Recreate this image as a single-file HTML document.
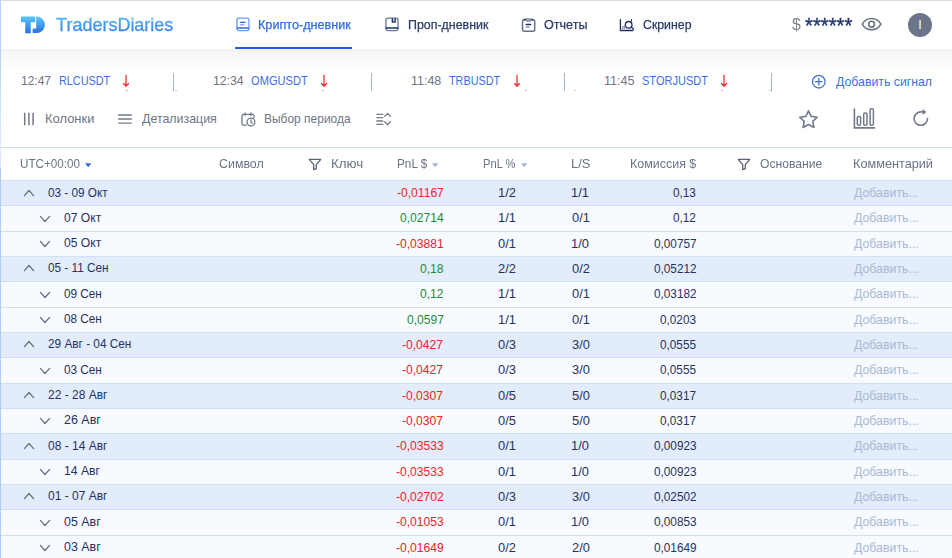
<!DOCTYPE html>
<html lang="ru"><head><meta charset="utf-8"><title>TradersDiaries</title>
<style>
html,body{margin:0;padding:0}
body{width:952px;height:558px;overflow:hidden;background:#fff;position:relative;font-family:"Liberation Sans", sans-serif;}
#app{position:absolute;left:0;top:0;width:952px;height:558px;overflow:hidden;background:#fff}
.t{position:absolute;white-space:nowrap;line-height:20px;height:20px;transform-origin:0 0;font-family:"Liberation Sans", sans-serif}
.i{position:absolute;overflow:visible}
.edge-t{position:absolute;left:1px;top:0;width:951px;height:1px;background:#dadbdd}
.edge-l{position:absolute;left:0;top:0;width:1px;height:558px;background:linear-gradient(#b7d3f6 0,#b7d3f6 50px,#dbe8fb 130px,#dbe8fb 167px,#aecdf5 168px,#aecdf5 558px)}
.shadow{position:absolute;left:1px;top:49px;width:951px;height:26px;background:linear-gradient(#f3f3f3 0,#f7f7f7 6px,#fafafa 11px,#fcfcfc 16px,#fefefe 21px,#fff 26px)}
.ul{position:absolute;left:235px;top:47px;width:117px;height:2px;background:#1d5fe0}
.av{position:absolute;left:908px;top:13px;width:24px;height:24px;border-radius:50%;background:#6b7488}
.sep{position:absolute;top:73px;width:1px;height:18px;background:#a9b6d1}
.dot{position:absolute;top:90px;width:2px;height:1px}
.hb{position:absolute;left:1px;width:951px;height:1px;background:#cfdff7;top:147px}
.b{position:absolute;left:1px;width:951px;height:1px;background:#cfdff7}
.r{position:absolute;left:1px;width:951px}
.st{-webkit-text-stroke:.35px #24386b}
.nost{-webkit-text-stroke:0}
.ga{will-change:opacity}
.nv{-webkit-text-stroke:.25px currentColor}
.g{background:#e3ecfb}
.c{background:#f7faff}
</style></head><body><div id="app">
<div class="shadow"></div>
<div class="edge-t"></div><div class="edge-l"></div>
<div class="ul"></div>
<div class="av"></div>
<div class="sep" style="left:173px"></div><div class="sep" style="left:371px"></div><div class="sep" style="left:564px"></div><div class="sep" style="left:771px"></div><div class="dot" style="left:126px;background:#f7a3a3"></div><div class="dot" style="left:175px;background:#c3cbe0"></div><div class="dot" style="left:322px;background:#9fd3a6"></div><div class="dot" style="left:525px;background:#9fd3a6"></div><div class="dot" style="left:574px;background:#c3cbe0"></div><div class="dot" style="left:721px;background:#f7a3a3"></div><div class="dot" style="left:769px;background:#c3cbe0"></div>
<div class="hb"></div>
<div class="r g" style="top:181px;height:24px"></div><div class="r c" style="top:206px;height:25px"></div><div class="r c" style="top:232px;height:24px"></div><div class="r g" style="top:257px;height:24px"></div><div class="r c" style="top:282px;height:25px"></div><div class="r c" style="top:308px;height:24px"></div><div class="r g" style="top:333px;height:24px"></div><div class="r c" style="top:358px;height:25px"></div><div class="r g" style="top:384px;height:24px"></div><div class="r c" style="top:409px;height:24px"></div><div class="r g" style="top:434px;height:25px"></div><div class="r c" style="top:460px;height:24px"></div><div class="r g" style="top:485px;height:24px"></div><div class="r c" style="top:510px;height:25px"></div><div class="r c" style="top:536px;height:24px"></div>
<div class="b" style="top:180px"></div><div class="b" style="top:205px"></div><div class="b" style="top:231px"></div><div class="b" style="top:256px"></div><div class="b" style="top:281px"></div><div class="b" style="top:307px"></div><div class="b" style="top:332px"></div><div class="b" style="top:357px"></div><div class="b" style="top:383px"></div><div class="b" style="top:408px"></div><div class="b" style="top:433px"></div><div class="b" style="top:459px"></div><div class="b" style="top:484px"></div><div class="b" style="top:509px"></div><div class="b" style="top:535px"></div>
<svg class="i" style="left:20px;top:15px" width="27" height="20" viewBox="0 0 27 20" ><defs><linearGradient id="lg" x1="0" y1="0" x2="0" y2="1"><stop offset="0" stop-color="#5cc8fb"/><stop offset="1" stop-color="#2b6de0"/></linearGradient></defs><path fill="url(#lg)" d="M1 1.6h14.2v5.6h-4.5v10.5q0 .6-.6.6h-4.3q-.6 0-.6-.6V7.2H1z"/><path fill="url(#lg)" d="M16.2 1.6h.4a8.25 8.25 0 0 1 0 16.5h-3.4q-.6 0-.6-.6v-3.3q0-.6.6-.6h2.4q.6 0 .6-.6z"/></svg><svg class="i" style="left:0;top:0;will-change:opacity" width="200" height="48" viewBox="0 0 200 48"><defs><linearGradient id="tg" gradientUnits="userSpaceOnUse" x1="0" y1="-13" x2="0" y2="0"><stop offset="0" stop-color="#55b4f5"/><stop offset="1" stop-color="#3585e8"/></linearGradient></defs><text x="0" y="0" transform="translate(56.11 31) scale(0.9776 1)" font-family="Liberation Sans, sans-serif" font-size="18.4" fill="url(#tg)" stroke="url(#tg)" stroke-width=".3">TradersDiaries</text></svg><svg class="i" style="left:236.2px;top:17.2px" width="14" height="15" viewBox="0 0 14 15" ><g fill="none" stroke-width="1.3" stroke-linejoin="round" stroke-linecap="round"><rect x=".9" y="1.2" width="12.1" height="12.4" rx="2" stroke="#6b9aec"/><path d="M1.2 11h11.5" stroke="#2f68e2"/><path d="M4.5 5.4h4.6" stroke="#2f68e2"/><path d="M4.5 7.8h3.2" stroke="#6b9aec"/></g></svg><svg class="i" style="left:385.1px;top:17.2px" width="14" height="15" viewBox="0 0 14 15" ><g fill="none" stroke-width="1.3" stroke-linejoin="round" stroke-linecap="round"><rect x=".9" y="1.2" width="12.1" height="12.4" rx="2" stroke="#6a7596"/><path d="M1.2 11h11.5" stroke="#1f2f60"/><path d="M7.3 1.6v3.5h2.9V1.6" stroke="#1f2f60" fill="#c5cbd9"/></g></svg><svg class="i" style="left:521.2px;top:17px" width="15" height="15.5" viewBox="0 0 15 15.5" ><g fill="none" stroke-width="1.5" stroke-linejoin="round" stroke-linecap="round"><rect x="1.5" y="2.7" width="12.2" height="11.5" rx="2" stroke="#65708f"/><path d="M3.2 2.6h1.6M10.2 2.6h1.6" stroke="#1f2f60"/><rect x="5.2" y="1.6" width="4.8" height="2.8" rx=".5" fill="#8f99b3" stroke="#8f99b3" stroke-width=".8"/><path d="M5.2 7.4h4.4" stroke="#1f2f60"/><path d="M5.2 10.1h2.8" stroke="#8f99b3"/></g></svg><svg class="i" style="left:619px;top:18px" width="16" height="14" viewBox="0 0 16 14" ><g fill="none" stroke="#1f2f60" stroke-width="1.3" stroke-linecap="round"><path d="M1.4 1.7v10.8h12.2"/><circle cx="9.7" cy="6.8" r="3.3"/><path d="M12.3 9.3l2.3 1.7l-1 1.5M12.4 1.6l.2 1.7" stroke-width="1.1"/><path d="M3.8 10.6v-2.2M5.6 10.6V7.4" stroke="#8f99b3" stroke-width="1.5"/></g></svg><svg class="i" style="left:861.1px;top:17.2px" width="21" height="14" viewBox="0 0 21 14" ><g fill="none" stroke="#6b7385" stroke-width="1.5"><path d="M1.3 7.2C3.2 3.6 6.6 1.6 10.6 1.6s7.4 2 9.3 5.6c-1.9 3.6-5.3 5.6-9.3 5.6S3.2 10.8 1.3 7.2z"/><circle cx="10.6" cy="7.2" r="2.9" stroke-width="1.6"/></g></svg><svg class="i" style="left:122px;top:74px" width="8" height="14" viewBox="0 0 8 14" ><g fill="none" stroke="#f03535" stroke-width="1.3" stroke-linecap="round" stroke-linejoin="round"><path d="M4 1.2v10.8M1.5 9.5L4 12.2l2.5-2.7"/></g></svg><svg class="i" style="left:319.8px;top:74px" width="8" height="14" viewBox="0 0 8 14" ><g fill="none" stroke="#f03535" stroke-width="1.3" stroke-linecap="round" stroke-linejoin="round"><path d="M4 1.2v10.8M1.5 9.5L4 12.2l2.5-2.7"/></g></svg><svg class="i" style="left:512.7px;top:74px" width="8" height="14" viewBox="0 0 8 14" ><g fill="none" stroke="#f03535" stroke-width="1.3" stroke-linecap="round" stroke-linejoin="round"><path d="M4 1.2v10.8M1.5 9.5L4 12.2l2.5-2.7"/></g></svg><svg class="i" style="left:720px;top:74px" width="8" height="14" viewBox="0 0 8 14" ><g fill="none" stroke="#f03535" stroke-width="1.3" stroke-linecap="round" stroke-linejoin="round"><path d="M4 1.2v10.8M1.5 9.5L4 12.2l2.5-2.7"/></g></svg><svg class="i" style="left:811px;top:74px" width="16" height="16" viewBox="0 0 16 16" ><g fill="none" stroke="#3e6fe0" stroke-width="1.3" stroke-linecap="round"><circle cx="7.8" cy="7.7" r="6.3"/><path d="M7.8 4.5v6.4M4.6 7.7h6.4"/></g></svg><svg class="i" style="left:23px;top:112px" width="12" height="14" viewBox="0 0 12 14" ><g stroke="#727a8b" stroke-width="1.5"><path d="M1.7 .7v12.6M5.9 .7v12.6M10.1 .7v12.6"/></g></svg><svg class="i" style="left:118px;top:113px" width="14" height="12" viewBox="0 0 14 12" ><g stroke="#727a8b" stroke-width="1.4"><path d="M.2 2h13.6M.2 6h13.6M.2 10.1h13.6"/></g></svg><svg class="i" style="left:240.5px;top:111.5px" width="15" height="15" viewBox="0 0 15 15" ><g fill="none" stroke="#727a8b" stroke-width="1.3" stroke-linecap="round" stroke-linejoin="round"><path d="M5.2 13.2H2.6a1.6 1.6 0 0 1-1.6-1.6V4a1.6 1.6 0 0 1 1.6-1.6h8.8A1.6 1.6 0 0 1 13 4v1.6"/><path d="M4 .9v2.6M10 .9v2.6"/><circle cx="10" cy="10" r="3.9"/><path d="M10 8v2.2l1.4 1"/></g></svg><svg class="i" style="left:375.5px;top:112px" width="16" height="14" viewBox="0 0 16 14" ><g fill="none" stroke="#727a8b" stroke-width="1.3" stroke-linecap="round" stroke-linejoin="round"><path d="M.8 2.4h6M.8 5.7h6M.8 9h6M.8 12.3h6"/><path d="M8.7 4.3l2.9-2.9 2.9 2.9M8.7 9.8l2.9 2.9 2.9-2.9"/></g></svg><svg class="i" style="left:798px;top:108.5px" width="21" height="21" viewBox="0 0 21 21" ><path fill="none" stroke="#727a8b" stroke-width="1.6" stroke-linejoin="round" d="M10.5 1.8l2.7 5.6 6.1.8-4.5 4.2 1.1 6.1-5.4-3-5.4 3 1.1-6.1L1.7 8.2l6.1-.8z"/></svg><svg class="i" style="left:852.5px;top:108px" width="23" height="21" viewBox="0 0 23 21" ><g fill="none" stroke="#727a8b" stroke-width="1.5" stroke-linecap="round"><path d="M1.4 1v18.9h20.2" stroke-width="1.6"/><rect x="4.3" y="8.4" width="3.3" height="8.9" rx="1.3"/><rect x="10.7" y="5.1" width="3.3" height="12.2" rx="1.3"/><rect x="17.1" y=".7" width="3.3" height="16.6" rx="1.3"/></g></svg><svg class="i" style="left:911.5px;top:107.7px" width="18" height="19" viewBox="0 0 18 19" ><g fill="none" stroke="#727a8b" stroke-width="1.6" stroke-linecap="round"><path d="M15.5 10.6a6.7 6.7 0 1 1-6.7-6.7h2.5"/></g><path fill="#727a8b" d="M10.6 .9l3.7 3-3.7 3z"/></svg><svg class="i" style="left:307.8px;top:158px" width="14" height="13" viewBox="0 0 14 13" ><path fill="none" stroke="#5a6275" stroke-width="1.3" stroke-linejoin="round" d="M1.2 1.4h11.6L8.3 6.6v4.1l-2.6 .9V6.6z"/></svg><svg class="i" style="left:737.2px;top:158px" width="14" height="13" viewBox="0 0 14 13" ><path fill="none" stroke="#5a6275" stroke-width="1.3" stroke-linejoin="round" d="M1.2 1.4h11.6L8.3 6.6v4.1l-2.6 .9V6.6z"/></svg><svg class="i" style="left:85px;top:162.7px" width="7" height="5" viewBox="0 0 7 5" ><path fill="#2a6be0" d="M0 .3h6.4L3.2 4.2z"/></svg><svg class="i" style="left:431.8px;top:162.7px" width="7" height="5" viewBox="0 0 7 5" ><path fill="#a3b5d3" d="M0 .3h6.4L3.2 4.2z"/></svg><svg class="i" style="left:520.7px;top:162.7px" width="7" height="5" viewBox="0 0 7 5" ><path fill="#a3b5d3" d="M0 .3h6.4L3.2 4.2z"/></svg><svg class="i" style="left:23.1px;top:188.9px" width="12" height="8" viewBox="0 0 12 8" ><path fill="none" stroke="#6b7385" stroke-width="1.4" stroke-linecap="round" stroke-linejoin="round" d="M1.4 6.6L6 1.5l4.6 5.1"/></svg><svg class="i" style="left:39.1px;top:215.3px" width="12" height="8" viewBox="0 0 12 8" ><path fill="none" stroke="#6b7385" stroke-width="1.4" stroke-linecap="round" stroke-linejoin="round" d="M1.4 1.4L6 6.5l4.6-5.1"/></svg><svg class="i" style="left:39.1px;top:240.3px" width="12" height="8" viewBox="0 0 12 8" ><path fill="none" stroke="#6b7385" stroke-width="1.4" stroke-linecap="round" stroke-linejoin="round" d="M1.4 1.4L6 6.5l4.6-5.1"/></svg><svg class="i" style="left:23.1px;top:263.9px" width="12" height="8" viewBox="0 0 12 8" ><path fill="none" stroke="#6b7385" stroke-width="1.4" stroke-linecap="round" stroke-linejoin="round" d="M1.4 6.6L6 1.5l4.6 5.1"/></svg><svg class="i" style="left:39.1px;top:291.3px" width="12" height="8" viewBox="0 0 12 8" ><path fill="none" stroke="#6b7385" stroke-width="1.4" stroke-linecap="round" stroke-linejoin="round" d="M1.4 1.4L6 6.5l4.6-5.1"/></svg><svg class="i" style="left:39.1px;top:316.3px" width="12" height="8" viewBox="0 0 12 8" ><path fill="none" stroke="#6b7385" stroke-width="1.4" stroke-linecap="round" stroke-linejoin="round" d="M1.4 1.4L6 6.5l4.6-5.1"/></svg><svg class="i" style="left:23.1px;top:339.9px" width="12" height="8" viewBox="0 0 12 8" ><path fill="none" stroke="#6b7385" stroke-width="1.4" stroke-linecap="round" stroke-linejoin="round" d="M1.4 6.6L6 1.5l4.6 5.1"/></svg><svg class="i" style="left:39.1px;top:367.3px" width="12" height="8" viewBox="0 0 12 8" ><path fill="none" stroke="#6b7385" stroke-width="1.4" stroke-linecap="round" stroke-linejoin="round" d="M1.4 1.4L6 6.5l4.6-5.1"/></svg><svg class="i" style="left:23.1px;top:390.9px" width="12" height="8" viewBox="0 0 12 8" ><path fill="none" stroke="#6b7385" stroke-width="1.4" stroke-linecap="round" stroke-linejoin="round" d="M1.4 6.6L6 1.5l4.6 5.1"/></svg><svg class="i" style="left:39.1px;top:417.3px" width="12" height="8" viewBox="0 0 12 8" ><path fill="none" stroke="#6b7385" stroke-width="1.4" stroke-linecap="round" stroke-linejoin="round" d="M1.4 1.4L6 6.5l4.6-5.1"/></svg><svg class="i" style="left:23.1px;top:441.9px" width="12" height="8" viewBox="0 0 12 8" ><path fill="none" stroke="#6b7385" stroke-width="1.4" stroke-linecap="round" stroke-linejoin="round" d="M1.4 6.6L6 1.5l4.6 5.1"/></svg><svg class="i" style="left:39.1px;top:468.3px" width="12" height="8" viewBox="0 0 12 8" ><path fill="none" stroke="#6b7385" stroke-width="1.4" stroke-linecap="round" stroke-linejoin="round" d="M1.4 1.4L6 6.5l4.6-5.1"/></svg><svg class="i" style="left:23.1px;top:491.9px" width="12" height="8" viewBox="0 0 12 8" ><path fill="none" stroke="#6b7385" stroke-width="1.4" stroke-linecap="round" stroke-linejoin="round" d="M1.4 6.6L6 1.5l4.6 5.1"/></svg><svg class="i" style="left:39.1px;top:519.3px" width="12" height="8" viewBox="0 0 12 8" ><path fill="none" stroke="#6b7385" stroke-width="1.4" stroke-linecap="round" stroke-linejoin="round" d="M1.4 1.4L6 6.5l4.6-5.1"/></svg><svg class="i" style="left:39.1px;top:544.3px" width="12" height="8" viewBox="0 0 12 8" ><path fill="none" stroke="#6b7385" stroke-width="1.4" stroke-linecap="round" stroke-linejoin="round" d="M1.4 1.4L6 6.5l4.6-5.1"/></svg>
<span class="t ga nv" style="left:258.33px;top:15.00px;font-size:13px;color:#2f6be0;transform:scaleX(0.9713)">Крипто-дневник</span><span class="t ga nv" style="left:407.54px;top:15.00px;font-size:13px;color:#2b3a67;transform:scaleX(0.9554)">Проп-дневник</span><span class="t ga nv" style="left:544.32px;top:15.00px;font-size:13px;color:#2b3a67;transform:scaleX(0.9680)">Отчеты</span><span class="t ga nv" style="left:643.23px;top:15.00px;font-size:13px;color:#2b3a67;transform:scaleX(0.9466)">Скринер</span><span class="t ga" style="left:791.60px;top:14.80px;font-size:16px;color:#7d8594;transform:scaleX(0.9884)">$</span><span class="t st ga" style="left:804.52px;top:16.40px;font-size:22px;color:#24386b;transform:scaleX(0.9231)">******</span><span class="t nost" style="left:918.20px;top:15.00px;font-size:12.5px;color:#ffffff;transform:scaleX(1.0000)">I</span><span class="t" style="left:20.87px;top:71.10px;font-size:13px;color:#70757f;transform:scaleX(0.9225)">12:47</span><span class="t" style="left:58.67px;top:71.10px;font-size:13px;color:#3e6fe0;transform:scaleX(0.8329)">RLCUSDT</span><span class="t" style="left:212.75px;top:71.10px;font-size:13px;color:#70757f;transform:scaleX(0.9424)">12:34</span><span class="t" style="left:250.89px;top:71.10px;font-size:13px;color:#3e6fe0;transform:scaleX(0.8537)">OMGUSDT</span><span class="t" style="left:410.84px;top:71.10px;font-size:13px;color:#70757f;transform:scaleX(0.9590)">11:48</span><span class="t" style="left:449.33px;top:71.10px;font-size:13px;color:#3e6fe0;transform:scaleX(0.8319)">TRBUSDT</span><span class="t" style="left:603.83px;top:71.10px;font-size:13px;color:#70757f;transform:scaleX(0.9689)">11:45</span><span class="t" style="left:641.98px;top:71.10px;font-size:13px;color:#3e6fe0;transform:scaleX(0.8491)">STORJUSDT</span><span class="t" style="left:835.60px;top:72.20px;font-size:13px;color:#3e6fe0;transform:scaleX(0.9456)">Добавить сигнал</span><span class="t" style="left:44.81px;top:109.10px;font-size:13px;color:#6e7585;transform:scaleX(0.9949)">Колонки</span><span class="t" style="left:141.70px;top:109.10px;font-size:13px;color:#6e7585;transform:scaleX(0.9538)">Детализация</span><span class="t" style="left:263.68px;top:109.10px;font-size:13px;color:#6e7585;transform:scaleX(0.9214)">Выбор периода</span><span class="t ga" style="left:20.40px;top:154.10px;font-size:13px;color:#6b7385;transform:scaleX(0.8974)">UTC+00:00</span><span class="t ga" style="left:218.73px;top:154.10px;font-size:13px;color:#6b7385;transform:scaleX(0.9539)">Символ</span><span class="t ga" style="left:330.77px;top:154.10px;font-size:13px;color:#6b7385;transform:scaleX(1.0297)">Ключ</span><span class="t ga" style="left:397.00px;top:154.10px;font-size:13px;color:#6b7385;transform:scaleX(0.9043)">PnL $</span><span class="t ga" style="left:483.14px;top:154.10px;font-size:13px;color:#6b7385;transform:scaleX(0.8604)">PnL %</span><span class="t ga" style="left:571.30px;top:154.10px;font-size:13px;color:#6b7385;transform:scaleX(0.9977)">L/S</span><span class="t ga" style="left:629.94px;top:154.10px;font-size:13px;color:#6b7385;transform:scaleX(0.9586)">Комиссия $</span><span class="t ga" style="left:760.24px;top:154.10px;font-size:13px;color:#6b7385;transform:scaleX(0.9351)">Основание</span><span class="t ga" style="left:852.62px;top:154.10px;font-size:13px;color:#6b7385;transform:scaleX(0.9760)">Комментарий</span><span class="t" style="left:47.95px;top:183.00px;font-size:13px;color:#26325e;transform:scaleX(0.9031)">03 - 09 Окт</span><span class="t" style="left:396.65px;top:183.00px;font-size:13px;color:#ec2424;transform:scaleX(0.9300)">-0,01167</span><span class="t" style="left:497.71px;top:183.00px;font-size:13px;color:#26325e;transform:scaleX(0.9900)">1/2</span><span class="t" style="left:571.41px;top:183.00px;font-size:13px;color:#26325e;transform:scaleX(0.9900)">1/1</span><span class="t" style="left:673.16px;top:183.00px;font-size:13px;color:#26325e;transform:scaleX(0.9060)">0,13</span><span class="t" style="left:853.60px;top:183.00px;font-size:13px;color:#a9b9d3;transform:scaleX(0.9483)">Добавить...</span><span class="t" style="left:63.93px;top:208.00px;font-size:13px;color:#26325e;transform:scaleX(0.9309)">07 Окт</span><span class="t" style="left:399.50px;top:208.00px;font-size:13px;color:#238a36;transform:scaleX(0.9300)">0,02714</span><span class="t" style="left:497.71px;top:208.00px;font-size:13px;color:#26325e;transform:scaleX(0.9900)">1/1</span><span class="t" style="left:571.80px;top:208.00px;font-size:13px;color:#26325e;transform:scaleX(0.9900)">0/1</span><span class="t" style="left:673.25px;top:208.00px;font-size:13px;color:#26325e;transform:scaleX(0.9060)">0,12</span><span class="t" style="left:853.60px;top:208.00px;font-size:13px;color:#a9b9d3;transform:scaleX(0.9483)">Добавить...</span><span class="t" style="left:63.93px;top:233.00px;font-size:13px;color:#26325e;transform:scaleX(0.9309)">05 Окт</span><span class="t" style="left:395.76px;top:234.00px;font-size:13px;color:#ec2424;transform:scaleX(0.9300)">-0,03881</span><span class="t" style="left:498.11px;top:234.00px;font-size:13px;color:#26325e;transform:scaleX(0.9900)">0/1</span><span class="t" style="left:571.41px;top:234.00px;font-size:13px;color:#26325e;transform:scaleX(0.9900)">1/0</span><span class="t" style="left:653.60px;top:234.00px;font-size:13px;color:#26325e;transform:scaleX(0.9060)">0,00757</span><span class="t" style="left:853.60px;top:234.00px;font-size:13px;color:#a9b9d3;transform:scaleX(0.9483)">Добавить...</span><span class="t" style="left:47.95px;top:258.00px;font-size:13px;color:#26325e;transform:scaleX(0.9048)">05 - 11 Сен</span><span class="t" style="left:419.86px;top:259.00px;font-size:13px;color:#238a36;transform:scaleX(0.9300)">0,18</span><span class="t" style="left:498.01px;top:259.00px;font-size:13px;color:#26325e;transform:scaleX(0.9900)">2/2</span><span class="t" style="left:571.80px;top:259.00px;font-size:13px;color:#26325e;transform:scaleX(0.9900)">0/2</span><span class="t" style="left:653.60px;top:259.00px;font-size:13px;color:#26325e;transform:scaleX(0.9060)">0,05212</span><span class="t" style="left:853.60px;top:259.00px;font-size:13px;color:#a9b9d3;transform:scaleX(0.9483)">Добавить...</span><span class="t" style="left:63.95px;top:284.00px;font-size:13px;color:#26325e;transform:scaleX(0.9039)">09 Сен</span><span class="t" style="left:419.96px;top:284.00px;font-size:13px;color:#238a36;transform:scaleX(0.9300)">0,12</span><span class="t" style="left:497.71px;top:284.00px;font-size:13px;color:#26325e;transform:scaleX(0.9900)">1/1</span><span class="t" style="left:571.80px;top:284.00px;font-size:13px;color:#26325e;transform:scaleX(0.9900)">0/1</span><span class="t" style="left:653.60px;top:284.00px;font-size:13px;color:#26325e;transform:scaleX(0.9060)">0,03182</span><span class="t" style="left:853.60px;top:284.00px;font-size:13px;color:#a9b9d3;transform:scaleX(0.9483)">Добавить...</span><span class="t" style="left:63.95px;top:309.00px;font-size:13px;color:#26325e;transform:scaleX(0.9039)">08 Сен</span><span class="t" style="left:406.51px;top:310.00px;font-size:13px;color:#238a36;transform:scaleX(0.9300)">0,0597</span><span class="t" style="left:497.71px;top:310.00px;font-size:13px;color:#26325e;transform:scaleX(0.9900)">1/1</span><span class="t" style="left:571.80px;top:310.00px;font-size:13px;color:#26325e;transform:scaleX(0.9900)">0/1</span><span class="t" style="left:660.06px;top:310.00px;font-size:13px;color:#26325e;transform:scaleX(0.9060)">0,0203</span><span class="t" style="left:853.60px;top:310.00px;font-size:13px;color:#a9b9d3;transform:scaleX(0.9483)">Добавить...</span><span class="t" style="left:47.86px;top:334.00px;font-size:13px;color:#26325e;transform:scaleX(0.9077)">29 Авг - 04 Сен</span><span class="t" style="left:402.48px;top:335.00px;font-size:13px;color:#ec2424;transform:scaleX(0.9300)">-0,0427</span><span class="t" style="left:498.11px;top:335.00px;font-size:13px;color:#26325e;transform:scaleX(0.9900)">0/3</span><span class="t" style="left:571.90px;top:335.00px;font-size:13px;color:#26325e;transform:scaleX(0.9900)">3/0</span><span class="t" style="left:660.06px;top:335.00px;font-size:13px;color:#26325e;transform:scaleX(0.9060)">0,0555</span><span class="t" style="left:853.60px;top:335.00px;font-size:13px;color:#a9b9d3;transform:scaleX(0.9483)">Добавить...</span><span class="t" style="left:63.95px;top:360.00px;font-size:13px;color:#26325e;transform:scaleX(0.9039)">03 Сен</span><span class="t" style="left:402.48px;top:360.00px;font-size:13px;color:#ec2424;transform:scaleX(0.9300)">-0,0427</span><span class="t" style="left:498.11px;top:360.00px;font-size:13px;color:#26325e;transform:scaleX(0.9900)">0/3</span><span class="t" style="left:571.90px;top:360.00px;font-size:13px;color:#26325e;transform:scaleX(0.9900)">3/0</span><span class="t" style="left:660.06px;top:360.00px;font-size:13px;color:#26325e;transform:scaleX(0.9060)">0,0555</span><span class="t" style="left:853.60px;top:360.00px;font-size:13px;color:#a9b9d3;transform:scaleX(0.9483)">Добавить...</span><span class="t" style="left:47.85px;top:385.00px;font-size:13px;color:#26325e;transform:scaleX(0.9234)">22 - 28 Авг</span><span class="t" style="left:402.48px;top:386.00px;font-size:13px;color:#ec2424;transform:scaleX(0.9300)">-0,0307</span><span class="t" style="left:498.11px;top:386.00px;font-size:13px;color:#26325e;transform:scaleX(0.9900)">0/5</span><span class="t" style="left:571.80px;top:386.00px;font-size:13px;color:#26325e;transform:scaleX(0.9900)">5/0</span><span class="t" style="left:660.15px;top:386.00px;font-size:13px;color:#26325e;transform:scaleX(0.9060)">0,0317</span><span class="t" style="left:853.60px;top:386.00px;font-size:13px;color:#a9b9d3;transform:scaleX(0.9483)">Добавить...</span><span class="t" style="left:63.82px;top:410.00px;font-size:13px;color:#26325e;transform:scaleX(0.9586)">26 Авг</span><span class="t" style="left:402.48px;top:411.00px;font-size:13px;color:#ec2424;transform:scaleX(0.9300)">-0,0307</span><span class="t" style="left:498.11px;top:411.00px;font-size:13px;color:#26325e;transform:scaleX(0.9900)">0/5</span><span class="t" style="left:571.80px;top:411.00px;font-size:13px;color:#26325e;transform:scaleX(0.9900)">5/0</span><span class="t" style="left:660.15px;top:411.00px;font-size:13px;color:#26325e;transform:scaleX(0.9060)">0,0317</span><span class="t" style="left:853.60px;top:411.00px;font-size:13px;color:#a9b9d3;transform:scaleX(0.9483)">Добавить...</span><span class="t" style="left:47.94px;top:436.00px;font-size:13px;color:#26325e;transform:scaleX(0.9219)">08 - 14 Авг</span><span class="t" style="left:395.66px;top:436.00px;font-size:13px;color:#ec2424;transform:scaleX(0.9300)">-0,03533</span><span class="t" style="left:498.11px;top:436.00px;font-size:13px;color:#26325e;transform:scaleX(0.9900)">0/1</span><span class="t" style="left:571.41px;top:436.00px;font-size:13px;color:#26325e;transform:scaleX(0.9900)">1/0</span><span class="t" style="left:653.51px;top:436.00px;font-size:13px;color:#26325e;transform:scaleX(0.9060)">0,00923</span><span class="t" style="left:853.60px;top:436.00px;font-size:13px;color:#a9b9d3;transform:scaleX(0.9483)">Добавить...</span><span class="t" style="left:64.36px;top:461.00px;font-size:13px;color:#26325e;transform:scaleX(0.9368)">14 Авг</span><span class="t" style="left:395.66px;top:462.00px;font-size:13px;color:#ec2424;transform:scaleX(0.9300)">-0,03533</span><span class="t" style="left:498.11px;top:462.00px;font-size:13px;color:#26325e;transform:scaleX(0.9900)">0/1</span><span class="t" style="left:571.41px;top:462.00px;font-size:13px;color:#26325e;transform:scaleX(0.9900)">1/0</span><span class="t" style="left:653.51px;top:462.00px;font-size:13px;color:#26325e;transform:scaleX(0.9060)">0,00923</span><span class="t" style="left:853.60px;top:462.00px;font-size:13px;color:#a9b9d3;transform:scaleX(0.9483)">Добавить...</span><span class="t" style="left:47.94px;top:486.00px;font-size:13px;color:#26325e;transform:scaleX(0.9219)">01 - 07 Авг</span><span class="t" style="left:395.76px;top:487.00px;font-size:13px;color:#ec2424;transform:scaleX(0.9300)">-0,02702</span><span class="t" style="left:498.11px;top:487.00px;font-size:13px;color:#26325e;transform:scaleX(0.9900)">0/3</span><span class="t" style="left:571.90px;top:487.00px;font-size:13px;color:#26325e;transform:scaleX(0.9900)">3/0</span><span class="t" style="left:653.60px;top:487.00px;font-size:13px;color:#26325e;transform:scaleX(0.9060)">0,02502</span><span class="t" style="left:853.60px;top:487.00px;font-size:13px;color:#a9b9d3;transform:scaleX(0.9483)">Добавить...</span><span class="t" style="left:63.92px;top:512.00px;font-size:13px;color:#26325e;transform:scaleX(0.9561)">05 Авг</span><span class="t" style="left:395.66px;top:512.00px;font-size:13px;color:#ec2424;transform:scaleX(0.9300)">-0,01053</span><span class="t" style="left:498.11px;top:512.00px;font-size:13px;color:#26325e;transform:scaleX(0.9900)">0/1</span><span class="t" style="left:571.41px;top:512.00px;font-size:13px;color:#26325e;transform:scaleX(0.9900)">1/0</span><span class="t" style="left:653.51px;top:512.00px;font-size:13px;color:#26325e;transform:scaleX(0.9060)">0,00853</span><span class="t" style="left:853.60px;top:512.00px;font-size:13px;color:#a9b9d3;transform:scaleX(0.9483)">Добавить...</span><span class="t" style="left:63.92px;top:537.00px;font-size:13px;color:#26325e;transform:scaleX(0.9561)">03 Авг</span><span class="t" style="left:395.66px;top:538.00px;font-size:13px;color:#ec2424;transform:scaleX(0.9300)">-0,01649</span><span class="t" style="left:498.11px;top:538.00px;font-size:13px;color:#26325e;transform:scaleX(0.9900)">0/2</span><span class="t" style="left:571.71px;top:538.00px;font-size:13px;color:#26325e;transform:scaleX(0.9900)">2/0</span><span class="t" style="left:653.51px;top:538.00px;font-size:13px;color:#26325e;transform:scaleX(0.9060)">0,01649</span><span class="t" style="left:853.60px;top:538.00px;font-size:13px;color:#a9b9d3;transform:scaleX(0.9483)">Добавить...</span>
</div></body></html>
